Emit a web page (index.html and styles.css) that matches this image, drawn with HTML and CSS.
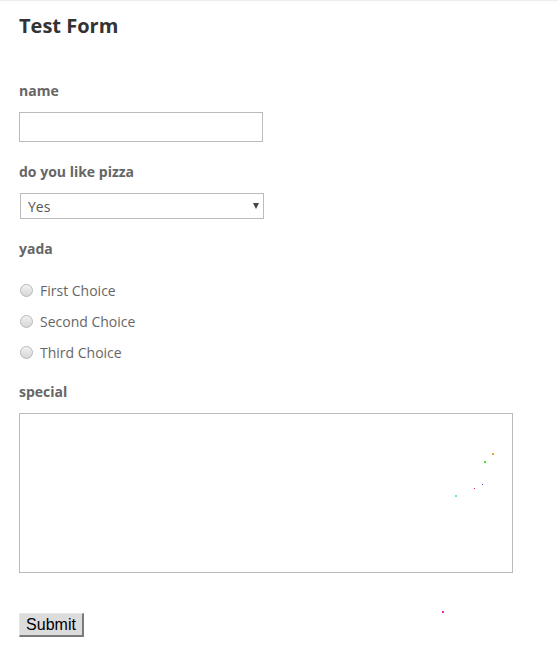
FILE: index.html
```html
<!DOCTYPE html>
<html>
<head>
<meta charset="utf-8">
<link rel="stylesheet" href="styles.css">
</head>
<body>
<div class="topbar"></div>
<form class="form">
  <h1 class="title">Test Form</h1>
  <label class="label label-first">name</label>
  <input class="text-input" type="text">
  <label class="label">do you like pizza</label>
  <div class="select-wrap">
    <select class="select"><option>Yes</option><option>No</option></select>
  </div>
  <label class="label">yada</label>
  <div class="radios">
    <label class="radio-row"><input type="radio" name="yada" class="radio"><span>First Choice</span></label>
    <label class="radio-row"><input type="radio" name="yada" class="radio"><span>Second Choice</span></label>
    <label class="radio-row"><input type="radio" name="yada" class="radio"><span>Third Choice</span></label>
  </div>
  <label class="label">special</label>
  <textarea class="textarea"></textarea>
  <button type="button" class="submit">Submit</button>
</form>
<div class="dots">
  <span class="dot dot-orange"></span>
  <span class="dot dot-green"></span>
  <span class="dot dot-blue"></span>
  <span class="dot dot-red"></span>
  <span class="dot dot-teal"></span>
  <span class="dot dot-magenta"></span>
</div>
</body>
</html>
```
FILE: styles.css
```css
html, body {
  margin: 0;
  padding: 0;
  background: #fff;
}
body {
  font-family: "Open Sans", "Liberation Sans", sans-serif;
  position: relative;
  width: 558px;
  height: 670px;
  overflow: hidden;
}
.topbar {
  height: 1px;
  background: #eee;
  box-shadow: 0 1px 4px rgba(0, 0, 0, 0.08);
}
.form {
  display: flex;
  flex-direction: column;
  align-items: flex-start;
  padding-left: 19px;
}
.title {
  margin: 12px 0 0;
  font-size: 20px;
  line-height: 26px;
  font-weight: 700;
  color: #333;
}
.label {
  display: block;
  font-size: 14px;
  line-height: 20px;
  font-weight: 700;
  color: #666;
  margin-top: 20px;
}
.label-first {
  margin-top: 42px;
}
.text-input {
  box-sizing: border-box;
  margin: 11px 0 0;
  width: 244px;
  height: 30px;
  border: 1px solid #bbb;
  padding: 0 6px;
  outline: none;
  font: 14px "Open Sans", sans-serif;
}
.select-wrap {
  position: relative;
  margin: 11px 0 0 1px;
}
.select-wrap::after {
  content: "";
  position: absolute;
  right: 5px;
  top: 10px;
  border-left: 3px solid transparent;
  border-right: 3px solid transparent;
  border-top: 6px solid #444;
  pointer-events: none;
}
.select {
  -webkit-appearance: none;
  appearance: none;
  box-sizing: border-box;
  width: 244px;
  height: 26px;
  border: 1px solid #bbb;
  border-radius: 0;
  background: #fff;
  padding: 0 0 0 7px;
  font: 14px "Open Sans", sans-serif;
  color: #555;
  outline: none;
}
.radios {
  display: flex;
  flex-direction: column;
  gap: 11px;
  margin-top: 21px;
}
.radio-row {
  display: flex;
  align-items: center;
  height: 20px;
  font-size: 14px;
  color: #666;
}
.radio {
  -webkit-appearance: none;
  appearance: none;
  box-sizing: border-box;
  width: 13px;
  height: 13px;
  margin: 0 7px 0 1px;
  border: 1px solid #b8b8b8;
  border-radius: 50%;
  background: linear-gradient(#f2f2f2, #d6d6d6);
}
.textarea {
  box-sizing: border-box;
  margin: 11px 0 0;
  width: 494px;
  height: 160px;
  border: 1px solid #bbb;
  resize: none;
  outline: none;
}
.submit {
  margin-top: 40px;
  box-sizing: border-box;
  width: 65px;
  height: 24px;
  padding: 0;
  font: 16px "Liberation Sans", Arial, sans-serif;
  color: #000;
  background: #dcdcdc;
  border-style: solid;
  border-width: 1px 2px 2px 1px;
  border-color: #e6e6e6 #7a7a7a #7a7a7a #e6e6e6;
  border-radius: 0;
}
.dots {
  position: absolute;
  inset: 0;
  pointer-events: none;
}
.dot {
  position: absolute;
  width: 2px;
  height: 2px;
}
.dot-orange { left: 492px; top: 453px; background: #f5a030; }
.dot-green { left: 484px; top: 461px; background: #55e030; }
.dot-blue { left: 482px; top: 484px; width: 1px; height: 1px; background: #5050f0; }
.dot-red { left: 474px; top: 488px; width: 1px; height: 1px; background: #f02060; }
.dot-teal { left: 455px; top: 495px; background: #60f0c0; }
.dot-magenta { left: 442px; top: 611px; background: #f020c0; }
```
